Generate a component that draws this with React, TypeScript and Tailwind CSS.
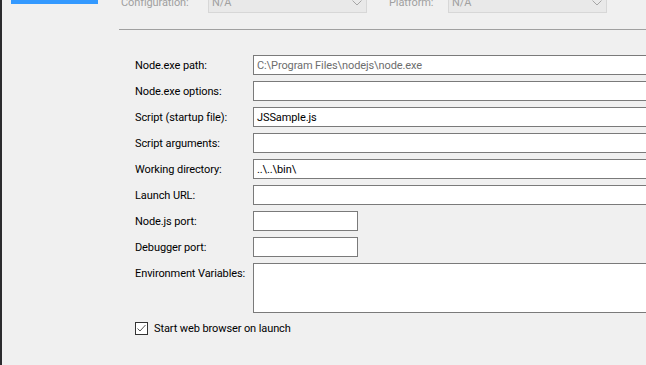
import React from "react";

const Chevron = () => (
  <svg width="10" height="6" viewBox="0 0 10 6" className="shrink-0">
    <path d="M0.5 0.5 L5 5 L9.5 0.5" fill="none" stroke="#a6a6a6" strokeWidth="1" />
  </svg>
);

const Combo = () => (
  <div className="w-[159px] h-[21px] bg-[#e9e9e9] border border-[#d7d7d7] flex items-center pl-[3px] pr-[4px] justify-between">
    <span className="text-[#a0a0a0]">N/A</span>
    <Chevron />
  </div>
);

const Field = ({ value, gray, short, tall }: { value?: string; gray?: boolean; short?: boolean; tall?: boolean }) => (
  <div
    className={`${short ? "w-[105px]" : "w-[420px]"} ${tall ? "h-[50px]" : "h-[20px]"} bg-white border border-[#7a7a7a] pl-[3px] flex whitespace-nowrap ${tall ? "items-start" : "items-center"} ${gray ? "text-[#6d6d6d]" : "text-black"}`}
  >
    {value}
  </div>
);

const rows: { label: string; value?: string; gray?: boolean; short?: boolean; tall?: boolean }[] = [
  { label: "Node.exe path:", value: "C:\\Program Files\\nodejs\\node.exe", gray: true },
  { label: "Node.exe options:" },
  { label: "Script (startup file):", value: "JSSample.js" },
  { label: "Script arguments:" },
  { label: "Working directory:", value: "..\\..\\bin\\" },
  { label: "Launch URL:" },
  { label: "Node.js port:", short: true },
  { label: "Debugger port:", short: true },
  { label: "Environment Variables:", tall: true },
];

export default function App() {
  return (
    <div
      className="w-[646px] h-[365px] bg-[#f0f0f0] flex overflow-hidden text-[11px] leading-[15px] tracking-[-0.1px] text-black"
      style={{ fontFamily: "Roboto, 'Liberation Sans', sans-serif" }}
    >
      <div className="w-[2px] h-full bg-[#2b2b2e] shrink-0" />
      <div className="w-[117px] shrink-0 pl-[9px]">
        <div className="w-[87px] h-[4px] bg-[#3399ff]" />
      </div>
      <div className="flex-1 flex flex-col min-w-0">
        <div className="flex items-center mt-[-8px] h-[21px] pl-[2px]">
          <span className="text-[#a0a0a0] w-[87px]">Configuration:</span>
          <Combo />
          <span className="text-[#a0a0a0] ml-[22px] w-[59px]">Platform:</span>
          <Combo />
        </div>
        <div className="mt-[16px] border-t border-[#a0a0a0]" />
        <div className="mt-[25px] pl-[16px] grid grid-cols-[118px_1fr] gap-y-[6px]">
          {rows.map((r) => (
            <React.Fragment key={r.label}>
              <div className={`flex whitespace-nowrap ${r.tall ? "items-start pt-[3px]" : "items-center"} h-full`}>{r.label}</div>
              <Field value={r.value} gray={r.gray} short={r.short} tall={r.tall} />
            </React.Fragment>
          ))}
        </div>
        <div className="mt-[8px] pl-[16px] flex items-center">
          <div className="w-[13px] h-[13px] border border-[#333] bg-white flex items-center justify-center">
            <svg width="11" height="11" viewBox="0 0 11 11">
              <path d="M1.5 5.5 L4 8 L9.5 2" fill="none" stroke="#555" strokeWidth="1" />
            </svg>
          </div>
          <span className="ml-[6px]">Start web browser on launch</span>
        </div>
      </div>
    </div>
  );
}
